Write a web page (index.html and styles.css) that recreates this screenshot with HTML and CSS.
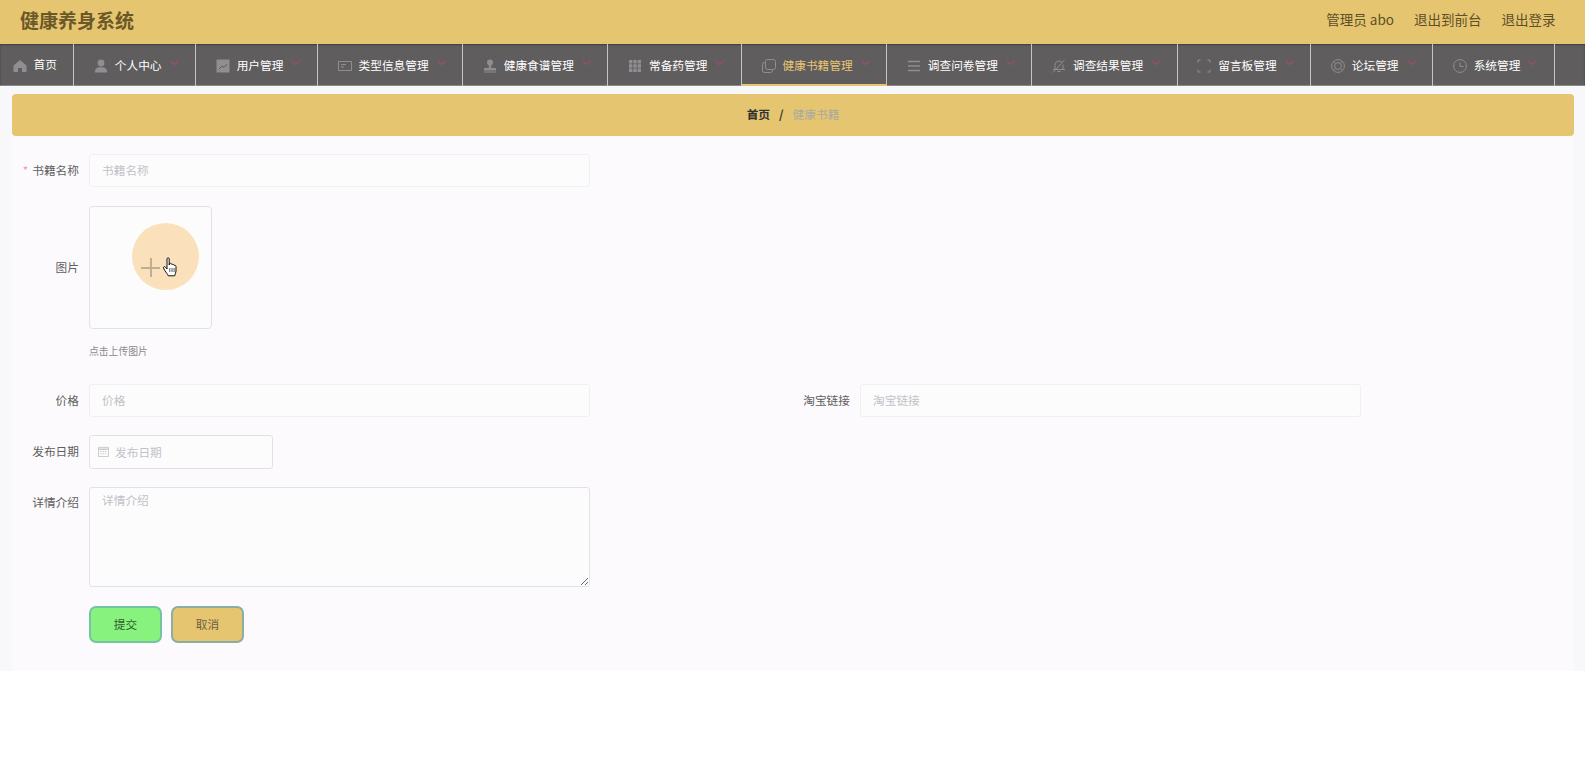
FILE: index.html
```html
<!DOCTYPE html>
<html lang="zh-CN">
<head>
    <meta charset="UTF-8">
    <meta name="viewport" content="width=device-width, initial-scale=1.0">
    <title>健康养身系统</title>
    <link rel="stylesheet" href="styles.css">
</head>
<body>

    <header class="topbar">
        <div class="brand">健康养身系统</div>
        <div class="user-links">
            <span>管理员 abo</span>
            <a href="#">退出到前台</a>
            <a href="#">退出登录</a>
        </div>
    </header>

    <nav class="menu">
        <a class="menu-item menu-home" href="#">
            <svg class="menu-icon" viewBox="0 0 14 14"><path d="M7 1 13.500 6.500V13H9V9H5V13H.5V6.500Z" fill="currentColor"/></svg>
            <span>首页</span>
        </a>
        <a class="menu-item" href="#">
            <svg class="menu-icon" viewBox="0 0 14 14"><circle cx="7" cy="4" r="3.400" fill="currentColor"/><path d="M.8 13.500C.8 9.500 3 8.200 7 8.200s6.200 1.300 6.200 5.300Z" fill="currentColor"/></svg>
            <span>个人中心</span>
            <svg class="chevron" viewBox="0 0 8 5"><path d="M.5.5 4 4 7.500.5" fill="none" stroke="currentColor"/></svg>
        </a>
        <a class="menu-item" href="#">
            <svg class="menu-icon" viewBox="0 0 14 14"><path d="M.5.5h13v13H.5Z" fill="currentColor"/><path d="M3 10 6 7l2 1.500L11 5" fill="none" stroke="#5f5d5d"/></svg>
            <span>用户管理</span>
            <svg class="chevron" viewBox="0 0 8 5"><path d="M.5.5 4 4 7.500.5" fill="none" stroke="currentColor"/></svg>
        </a>
        <a class="menu-item" href="#">
            <svg class="menu-icon" viewBox="0 0 14 14"><path d="M.5 2.500h13v9H.5Z" fill="none" stroke="currentColor"/><path d="M3 5.500h5M3 8h3" stroke="currentColor"/></svg>
            <span>类型信息管理</span>
            <svg class="chevron" viewBox="0 0 8 5"><path d="M.5.5 4 4 7.500.5" fill="none" stroke="currentColor"/></svg>
        </a>
        <a class="menu-item" href="#">
            <svg class="menu-icon" viewBox="0 0 14 14"><circle cx="7" cy="3.600" r="3" fill="currentColor"/><path d="M5.800 6h2.400v3H13v2.500H1V9h4.800ZM1 12.600h12v1H1Z" fill="currentColor"/></svg>
            <span>健康食谱管理</span>
            <svg class="chevron" viewBox="0 0 8 5"><path d="M.5.5 4 4 7.500.5" fill="none" stroke="currentColor"/></svg>
        </a>
        <a class="menu-item" href="#">
            <svg class="menu-icon" viewBox="0 0 14 14"><path d="M1 1h3.400v3.400H1ZM5.300 1h3.400v3.400H5.300ZM9.600 1H13v3.400H9.600ZM1 5.300h3.400v3.400H1ZM5.300 5.300h3.400v3.400H5.300ZM9.600 5.300H13v3.400H9.600ZM1 9.600h3.400V13H1ZM5.300 9.600h3.400V13H5.300ZM9.600 9.600H13V13H9.600Z" fill="currentColor"/></svg>
            <span>常备药管理</span>
            <svg class="chevron" viewBox="0 0 8 5"><path d="M.5.5 4 4 7.500.5" fill="none" stroke="currentColor"/></svg>
        </a>
        <a class="menu-item active" href="#">
            <svg class="menu-icon" viewBox="0 0 14 14"><rect x="3.500" y=".5" width="10" height="10" rx="2" fill="none" stroke="currentColor"/><path d="M3.500 3.500H2.500a2 2 0 0 0-2 2v6a2 2 0 0 0 2 2h6a2 2 0 0 0 2-2v-1" fill="none" stroke="currentColor"/></svg>
            <span>健康书籍管理</span>
            <svg class="chevron" viewBox="0 0 8 5"><path d="M.5.5 4 4 7.500.5" fill="none" stroke="currentColor"/></svg>
        </a>
        <a class="menu-item" href="#">
            <svg class="menu-icon" viewBox="0 0 14 14"><path d="M1 2.500h12M1 7h12M1 11.500h12" stroke="currentColor" stroke-width="1.400"/></svg>
            <span>调查问卷管理</span>
            <svg class="chevron" viewBox="0 0 8 5"><path d="M.5.5 4 4 7.500.5" fill="none" stroke="currentColor"/></svg>
        </a>
        <a class="menu-item" href="#">
            <svg class="menu-icon" viewBox="0 0 14 14"><path d="M3 10.500V6a4 4 0 0 1 7-2.600M11 5.500v5M1 10.500h12M5.500 12.500h3M1 13.500 12.500 1" fill="none" stroke="currentColor"/></svg>
            <span>调查结果管理</span>
            <svg class="chevron" viewBox="0 0 8 5"><path d="M.5.5 4 4 7.500.5" fill="none" stroke="currentColor"/></svg>
        </a>
        <a class="menu-item" href="#">
            <svg class="menu-icon" viewBox="0 0 14 14"><path d="M3.500 1H1v2.500M10.500 1H13v2.500M3.500 13H1v-2.500M10.500 13H13v-2.500" fill="none" stroke="currentColor"/></svg>
            <span>留言板管理</span>
            <svg class="chevron" viewBox="0 0 8 5"><path d="M.5.5 4 4 7.500.5" fill="none" stroke="currentColor"/></svg>
        </a>
        <a class="menu-item" href="#">
            <svg class="menu-icon" viewBox="0 0 14 14"><circle cx="7" cy="7" r="6.400" fill="none" stroke="currentColor"/><circle cx="7" cy="7" r="3.400" fill="none" stroke="currentColor"/><path d="M2.500 2.500 4.600 4.600M11.500 2.500 9.400 4.600M2.500 11.500l2.100-2.100M11.500 11.500 9.400 9.400" stroke="currentColor"/></svg>
            <span>论坛管理</span>
            <svg class="chevron" viewBox="0 0 8 5"><path d="M.5.5 4 4 7.500.5" fill="none" stroke="currentColor"/></svg>
        </a>
        <a class="menu-item" href="#">
            <svg class="menu-icon" viewBox="0 0 14 14"><circle cx="7" cy="7" r="6.400" fill="none" stroke="currentColor"/><path d="M7 3.500V7.500H10.500" fill="none" stroke="currentColor"/></svg>
            <span>系统管理</span>
            <svg class="chevron" viewBox="0 0 8 5"><path d="M.5.5 4 4 7.500.5" fill="none" stroke="currentColor"/></svg>
        </a>
    </nav>

    <main class="content">
        <div class="breadcrumb">
            <span class="crumb-link">首页</span>
            <span class="crumb-sep">/</span>
            <span class="crumb-current">健康书籍</span>
        </div>

        <form class="panel">
            <div class="form-row">
                <div class="form-col">
                    <label class="form-label" for="bookName"><i class="required">*</i>书籍名称</label>
                    <input class="form-input" id="bookName" type="text" placeholder="书籍名称">
                </div>
            </div>

            <div class="form-row upload-row">
                <div class="form-col upload-col">
                    <label class="form-label">图片</label>
                    <div>
                        <div class="upload-box">
                            <span class="upload-ripple"></span>
                            <span class="upload-plus"></span>
                            <svg class="upload-cursor" viewBox="0 0 17 21">
                                <path d="M5 1.800c0-1.300 2.200-1.300 2.200 0V8l.5-1.500c1-.5 2 0 2 .9l.4.100c.9-.5 1.900 0 1.900.9.900-.4 2 0 2 1.100v4.500c0 2-1 3-1.300 4.800H6.200c-.5-1.600-2-3-3.400-5.300L1.500 11c-.5-1.200 1.100-2 2-.9L5 12Z" fill="#fff" stroke="#111" stroke-width="1"/>
                                <path d="M7.800 11v4M10 11v4M12.100 11v4" stroke="#111" stroke-width=".7"/>
                            </svg>
                        </div>
                        <div class="upload-hint">点击上传图片</div>
                    </div>
                </div>
            </div>

            <div class="form-row">
                <div class="form-col">
                    <label class="form-label" for="price">价格</label>
                    <input class="form-input" id="price" type="text" placeholder="价格">
                </div>
                <div class="form-col">
                    <label class="form-label" for="taobao">淘宝链接</label>
                    <input class="form-input" id="taobao" type="text" placeholder="淘宝链接">
                </div>
            </div>

            <div class="form-row">
                <div class="form-col date-col">
                    <label class="form-label" for="pubDate">发布日期</label>
                    <div class="date-field">
                        <svg class="date-icon" viewBox="0 0 12 12"><path d="M.5 1.500h11v10H.5Z" fill="none" stroke="currentColor"/><path d="M.5 3.500h11" stroke="currentColor" stroke-width="1.500"/><path d="M2.500 6h7M2.500 8.500h7" stroke="currentColor" stroke-dasharray="1.500 1"/></svg>
                        <input class="date-input" id="pubDate" type="text" placeholder="发布日期">
                    </div>
                </div>
            </div>

            <div class="form-row">
                <div class="form-col textarea-col">
                    <label class="form-label" for="detail">详情介绍</label>
                    <textarea class="form-textarea" id="detail" placeholder="详情介绍"></textarea>
                </div>
            </div>

            <div class="form-actions">
                <button class="btn btn-submit" type="button">提交</button>
                <button class="btn btn-cancel" type="button">取消</button>
            </div>
        </form>
    </main>

</body>
</html>
```

FILE: styles.css
```css
* {
    box-sizing: border-box;
}

body {
    margin: 0;
    background-color: #fff;
    font-family: "Noto Sans CJK SC", "Liberation Sans", sans-serif;
    font-size: 11.7px;
    color: #606266;
}

a {
    color: inherit;
    text-decoration: none;
}

.topbar {
    display: flex;
    justify-content: space-between;
    align-items: center;
    height: 44px;
    padding: 0 29.5px 6px 20px;
    background-color: #e6c571;
}

.brand {
    font-size: 19px;
    font-weight: 700;
    color: #6b5828;
}

.user-links {
    display: flex;
    gap: 20px;
    font-size: 13.5px;
    color: #5d4f28;
}

.menu {
    display: flex;
    height: 42px;
    background-color: #5f5d5d;
    box-shadow: inset 0 1px 2px rgba(0, 0, 0, 0.35), inset 0 -1px 0 #8c8b8b;
}

.menu-item {
    display: flex;
    align-items: center;
    padding: 0 16.6px 2px 19.5px;
    border-right: 1px solid #c4c4c4;
    color: #fff;
    white-space: nowrap;
}

.menu-item.active {
    padding-bottom: 0;
    border-bottom: 2px solid #e6c571;
    color: #e6c571;
}

.menu-home {
    padding: 0 16.4px 4px 12.5px;
}

.menu-icon {
    flex: none;
    width: 14px;
    height: 14px;
    margin-top: 3px;
    margin-right: 7px;
    color: #8f8e92;
}

.menu-home .menu-icon {
    margin-top: 5px;
}

.chevron {
    flex: none;
    width: 9px;
    height: 6px;
    margin-left: 8px;
    margin-bottom: 2px;
    color: #a04a72;
}

.content {
    padding: 8px 11px 0 12px;
    background-color: #f8f8fb;
}

.breadcrumb {
    display: flex;
    justify-content: center;
    align-items: center;
    height: 42px;
    padding-bottom: 3px;
    border-radius: 4px;
    background-color: #e6c571;
}

.crumb-link {
    font-weight: 700;
    color: #303133;
}

.crumb-sep {
    margin: 0 9px;
    font-weight: 700;
    color: #303133;
}

.crumb-current {
    color: #a9aa9f;
}

.panel {
    height: 535px;
    padding-top: 18px;
    background-color: #fcfafc;
}

.form-row {
    display: flex;
    margin-bottom: 18px;
}

.form-col {
    display: flex;
    align-items: center;
    width: 771px;
}

.form-label {
    flex: none;
    width: 77px;
    padding-right: 10px;
    padding-bottom: 2px;
    text-align: right;
    color: #5f5f5f;
}

.required {
    margin-right: 4px;
    font-style: normal;
    color: #f29a9a;
}

.form-input,
.date-input,
.form-textarea {
    border: 1px solid #f1eff3;
    border-radius: 3px;
    background-color: #fdfcfd;
    font-family: inherit;
    font-size: 11.7px;
    color: #606266;
    outline: none;
}

.form-input::placeholder,
.date-input::placeholder,
.form-textarea::placeholder {
    color: #c0c2c8;
}

.form-input {
    width: 501px;
    height: 33px;
    padding: 0 12px 2px;
}

.upload-row {
    margin-top: 19px;
    margin-bottom: 26px;
}

.upload-col {
    align-items: flex-start;
}

.upload-col .form-label {
    margin-top: 52px;
}

.upload-box {
    position: relative;
    display: flex;
    justify-content: center;
    align-items: center;
    width: 123px;
    height: 123px;
    border: 1px solid #e2e1e8;
    border-radius: 4px;
    background-color: #fdfcfd;
}

.upload-ripple {
    position: absolute;
    left: 42px;
    top: 16px;
    width: 67px;
    height: 67px;
    border-radius: 50%;
    background-color: #fbe1bb;
}

.upload-plus {
    position: relative;
    width: 19px;
    height: 19px;
    background:
        linear-gradient(#c0ae90, #c0ae90) center / 100% 2px no-repeat,
        linear-gradient(#c0ae90, #c0ae90) center / 2px 100% no-repeat;
}

.upload-cursor {
    position: absolute;
    left: 72px;
    top: 50px;
    width: 17px;
    height: 21px;
}

.upload-hint {
    margin-top: 15px;
    font-size: 9.8px;
    line-height: 14px;
    color: #8b8b8f;
}

.date-col .form-label {
    padding-bottom: 4px;
}

.date-field {
    position: relative;
}

.date-icon {
    position: absolute;
    left: 9px;
    top: 11px;
    width: 11px;
    height: 11px;
    color: #c6c6cc;
}

.date-input {
    width: 184px;
    height: 34px;
    padding: 0 12px 2px 25px;
    border-color: #e2e1e8;
}

.textarea-col {
    align-items: flex-start;
}

.textarea-col .form-label {
    margin-top: 6px;
}

.form-textarea {
    width: 501px;
    height: 100px;
    padding: 3px 12px;
    border-color: #e2e1e8;
    line-height: 18px;
}

.form-actions {
    display: flex;
    gap: 9px;
    margin-top: 19px;
    padding-left: 77px;
}

.btn {
    width: 73px;
    height: 37px;
    padding-bottom: 3px;
    border: 2px solid #74c4a4;
    border-radius: 7px;
    font-family: inherit;
    font-size: 11.7px;
}

.btn-submit {
    background-color: #88f27e;
    color: #2f5f2a;
}

.btn-cancel {
    border-color: #8aaea4;
    background-color: #e6c571;
    color: #6b6242;
}
```
